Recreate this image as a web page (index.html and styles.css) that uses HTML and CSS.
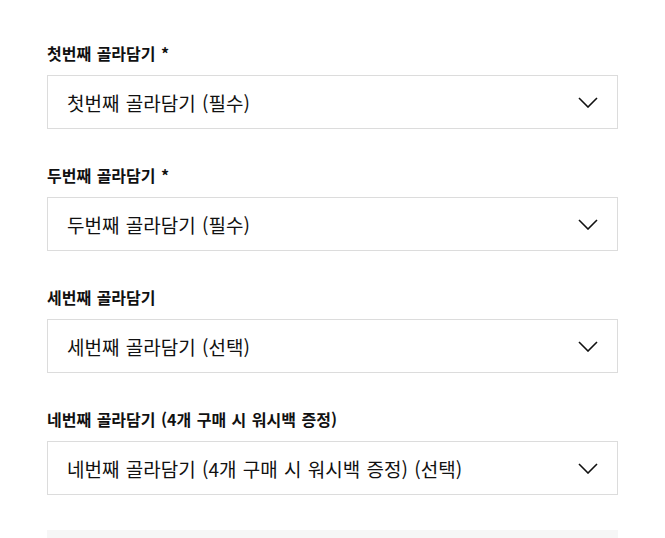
FILE: index.html
```html
<!DOCTYPE html>
<html lang="ko">
<head>
<meta charset="utf-8">
<link rel="stylesheet" href="styles.css">
</head>
<body>
<div class="form">
  <div class="field">
    <div class="label">첫번째 골라담기 *</div>
    <div class="select"><span>첫번째 골라담기 (필수)</span><svg class="chev" width="20" height="11" viewBox="0 0 20 11"><path d="M1 1 L10 10 L19 1" fill="none" stroke="#111" stroke-width="1.6"/></svg></div>
  </div>
  <div class="field">
    <div class="label">두번째 골라담기 *</div>
    <div class="select"><span>두번째 골라담기 (필수)</span><svg class="chev" width="20" height="11" viewBox="0 0 20 11"><path d="M1 1 L10 10 L19 1" fill="none" stroke="#111" stroke-width="1.6"/></svg></div>
  </div>
  <div class="field">
    <div class="label">세번째 골라담기</div>
    <div class="select"><span>세번째 골라담기 (선택)</span><svg class="chev" width="20" height="11" viewBox="0 0 20 11"><path d="M1 1 L10 10 L19 1" fill="none" stroke="#111" stroke-width="1.6"/></svg></div>
  </div>
  <div class="field">
    <div class="label">네번째 골라담기 (4개 구매 시 워시백 증정)</div>
    <div class="select"><span>네번째 골라담기 (4개 구매 시 워시백 증정) (선택)</span><svg class="chev" width="20" height="11" viewBox="0 0 20 11"><path d="M1 1 L10 10 L19 1" fill="none" stroke="#111" stroke-width="1.6"/></svg></div>
  </div>
  <div class="summary"></div>
</div>
</body>
</html>
```
FILE: styles.css
```css
html, body {
  margin: 0;
  padding: 0;
  background: #fff;
}
body {
  font-family: "Noto Sans CJK KR", "Noto Sans", sans-serif;
  color: #111;
}
.form {
  width: 571px;
  margin-left: 47px;
  padding-top: 42px;
  display: flex;
  flex-direction: column;
}
.field {
  display: flex;
  flex-direction: column;
  margin-bottom: 35px;
}
.label {
  font-size: 16px;
  font-weight: 700;
  line-height: 22px;
  height: 22px;
  margin-bottom: 11px;
  color: #111;
  word-spacing: 1px;
}
.select {
  box-sizing: border-box;
  height: 54px;
  border: 1px solid #dcdcdc;
  display: flex;
  align-items: center;
  justify-content: space-between;
  padding: 0 19px 0 19px;
  font-size: 19px;
  color: #111;
  word-spacing: 1px;
}
.chev {
  display: block;
}
.summary {
  height: 20px;
  background: #f6f6f6;
}
```
